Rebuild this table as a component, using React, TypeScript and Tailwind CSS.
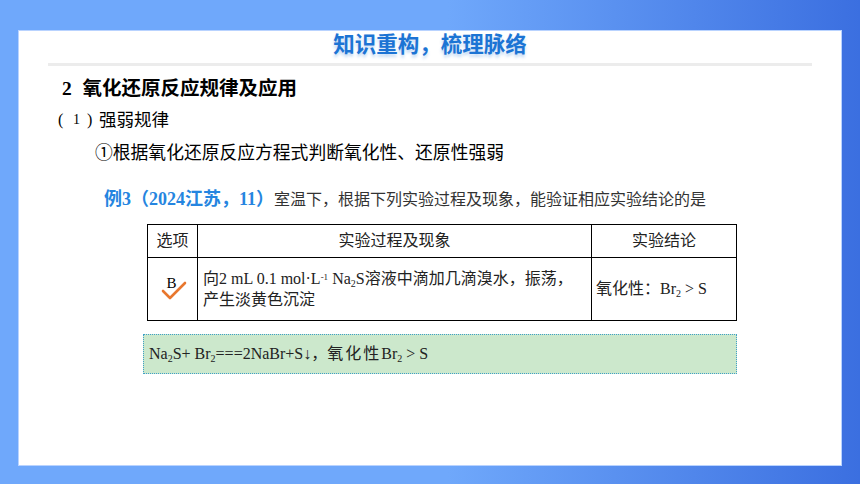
const serif = "font-['Liberation_Serif','Noto_Sans_CJK_SC',serif]";
const sans = "font-['Liberation_Sans','Noto_Sans_CJK_SC',sans-serif]";

function Check() {
  return (
    <span className="relative inline-block w-[30px] h-[26px] align-middle">
      <span className={`absolute left-[9px] top-[0px] text-[15px] leading-none text-black ${serif}`}>B</span>
      <svg className="absolute left-0 top-0" width="30" height="26" viewBox="0 0 30 26">
        <path d="M5 15 L12 22 L27 7" fill="none" stroke="#e8772e" strokeWidth="2.6" strokeLinecap="round" strokeLinejoin="round" />
      </svg>
    </span>
  );
}

export default function App() {
  return (
    <div className="w-[860px] h-[484px] bg-[linear-gradient(90deg,#6fa8fb_0%,#6fa8fb_52%,#3b6fe0_100%)] pt-[30px] px-[18px]">
      <div className="bg-white h-[436px] border border-[#b9d3ff]">
        <div className="flex flex-col items-center">
          <h1 className={`text-[21.5px] font-bold text-[#1c74d4] leading-[26px] mt-[1px] [text-shadow:0_3px_3px_rgba(28,116,212,0.25)] ${sans}`}>
            知识重构，梳理脉络
          </h1>
          <div className="w-[764px] h-[3px] bg-[#ececec] mt-[5px]" />
        </div>

        <div className={`pl-[43px] mt-[10px] text-[19.5px] font-bold text-black leading-[24px] ${sans}`}>
          <span className={serif}>2</span>&nbsp; 氧化还原反应规律及应用
        </div>
        <div className={`pl-[39px] mt-[7px] flex items-center text-[17.5px] text-black leading-[24px] ${sans}`}>
          <span className={`${serif} text-[16px] w-[15px]`}>(</span>
          <span className={`${serif} text-[14px] w-[14px]`}>1</span>
          <span className={`${serif} text-[16px] w-[12px]`}>)</span>
          <span>强弱规律</span>
        </div>
        <div className={`pl-[76px] mt-[9px] text-[17.8px] text-black leading-[24px] ${sans}`}>
          ①根据氧化还原反应方程式判断氧化性、还原性强弱
        </div>

        <div className={`pl-[85px] mt-[23px] text-[16px] leading-[22px] text-[#333] ${serif}`}>
          <span className="text-[#2585e0] font-bold text-[18px]">例3（2024江苏，11）</span>室温下，根据下列实验过程及现象，能验证相应实验结论的是
        </div>

        <table className={`ml-[128px] mt-[13px] w-[590px] border-collapse text-[16px] text-[#222] ${serif}`}>
          <tbody>
            <tr className="h-[33px]">
              <td className="border border-black w-[50px] text-center">选项</td>
              <td className="border border-black w-[394px] text-center">实验过程及现象</td>
              <td className="border border-black text-center">实验结论</td>
            </tr>
            <tr className="h-[63px]">
              <td className="border border-black text-center align-middle">
                <Check />
              </td>
              <td className="border border-black px-[5px] leading-[21px]">
                向2 mL 0.1 mol·L<sup className="text-[9px]">-1</sup> Na<sub className="text-[10px]">2</sub>S溶液中滴加几滴溴水，振荡，
                <br />
                产生淡黄色沉淀
              </td>
              <td className="border border-black px-[4px]">
                氧化性：Br<sub className="text-[10px]">2</sub> &gt; S
              </td>
            </tr>
          </tbody>
        </table>

        <div className={`ml-[124px] mt-[13px] w-[594px] h-[40px] bg-[#cce8cc] border border-dotted border-[#3fa0c8] flex items-center pl-[5px] text-[16px] text-[#222] ${serif}`}>
          <span>
            Na<sub className="text-[10px]">2</sub>S+ Br<sub className="text-[10px]">2</sub>===2NaBr+S↓，<span className="tracking-[2px]">氧化性</span>Br<sub className="text-[10px]">2</sub> &gt; S
          </span>
        </div>
      </div>
    </div>
  );
}
